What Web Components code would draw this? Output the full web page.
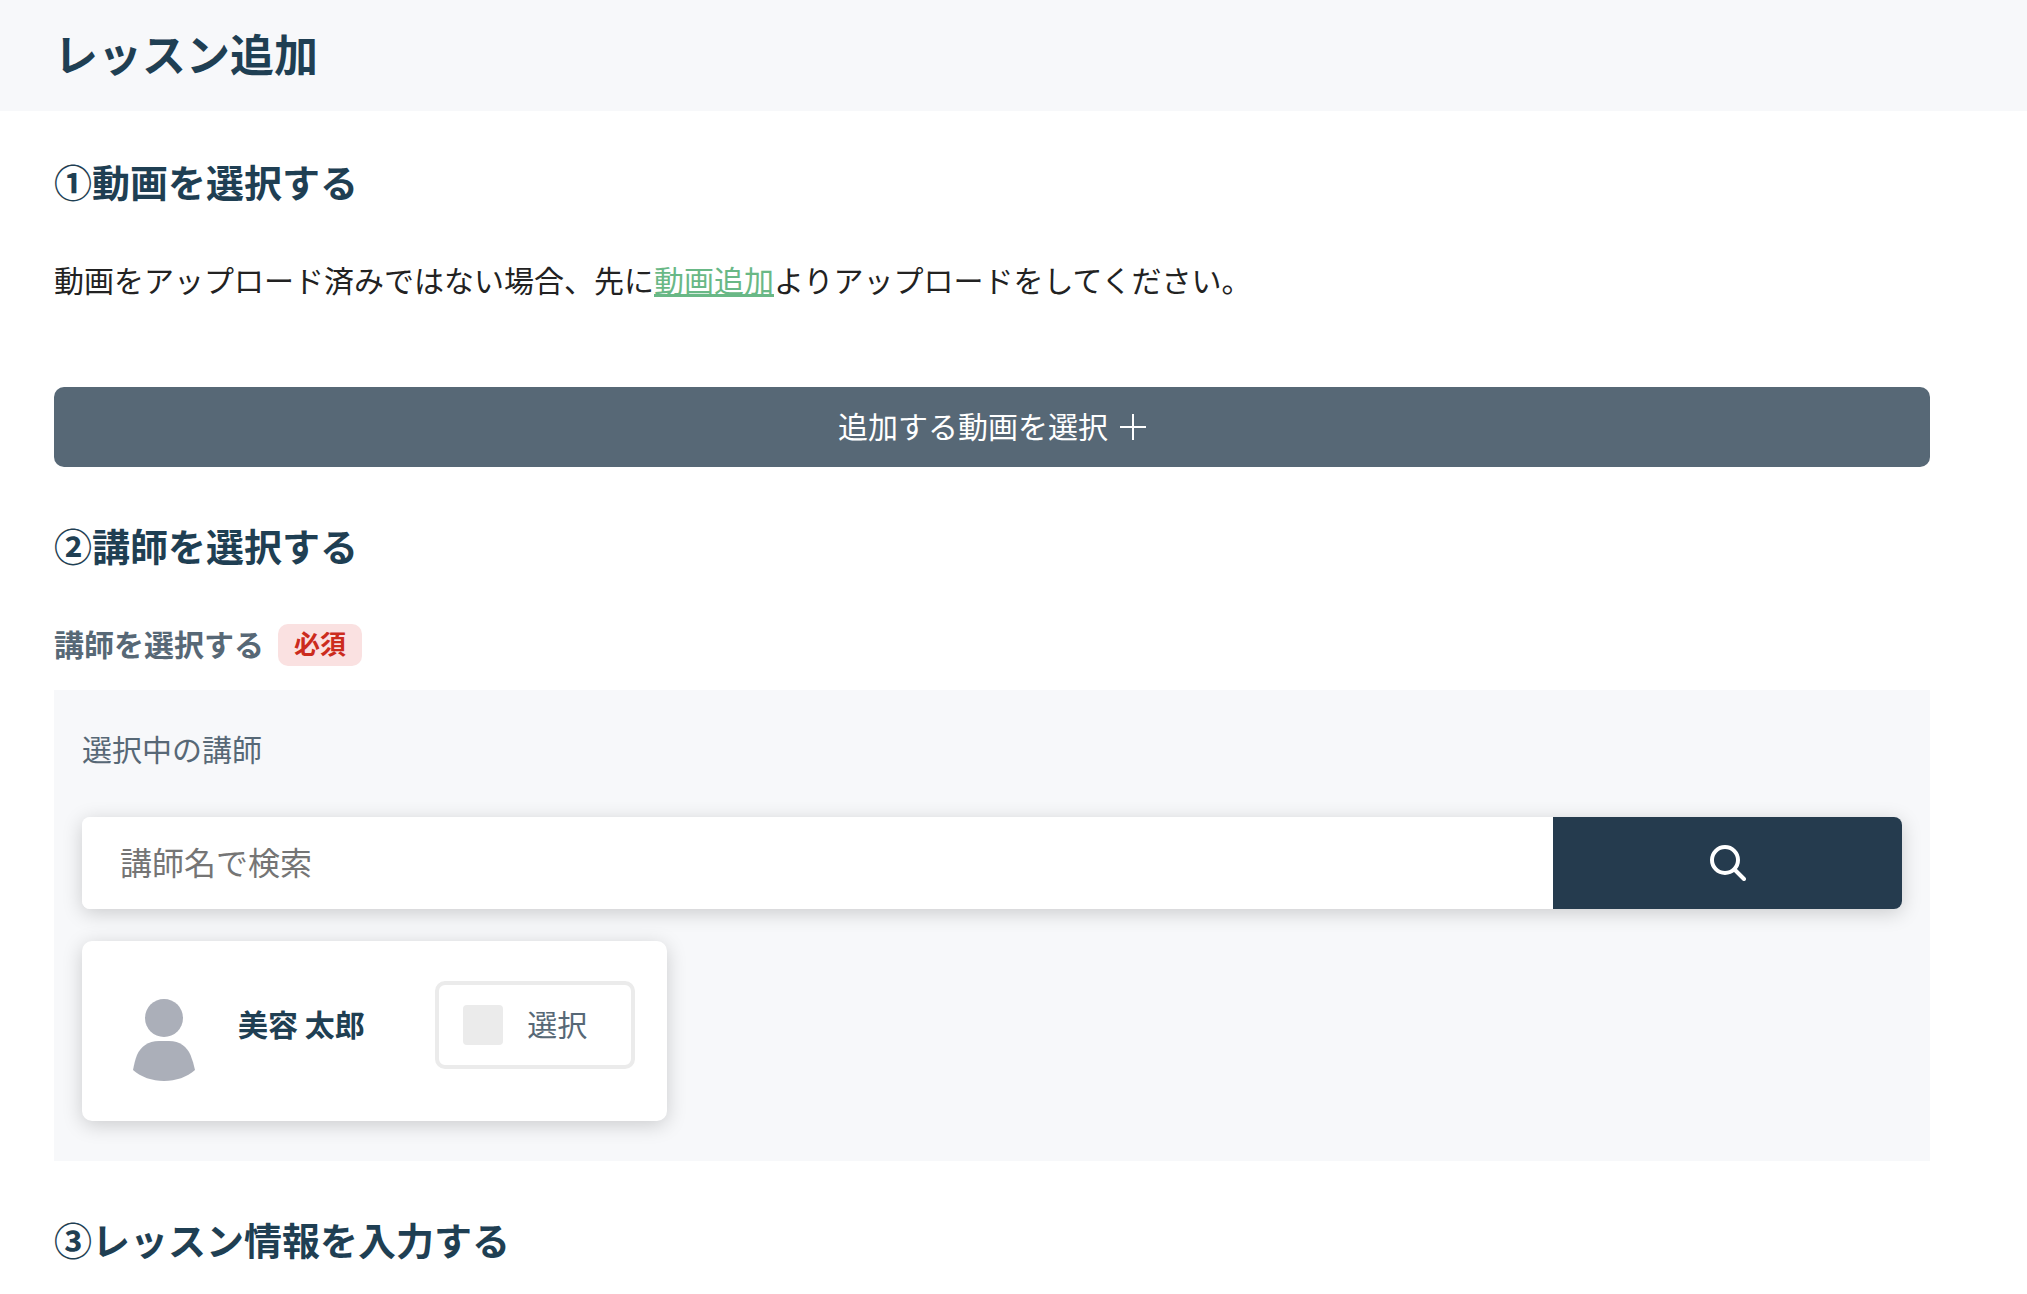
<!DOCTYPE html>
<html lang="ja">
<head>
<meta charset="utf-8">
<meta name="viewport" content="width=device-width, initial-scale=1">
<title>レッスン追加</title>
<style>
body {
  margin: 0;
  background: #fff;
  color: #222;
  font-family: "Noto Sans CJK JP", sans-serif;
  font-size: 30px;
  line-height: 44px;
  --navy: #1f3f53;
  --slate: #576876;
  --surface: #f7f8fa;
  --line: #ebebeb;
  --shadow: 0 4px 20px rgba(0, 0, 0, 0.18);
}

main {
  display: flex;
  flex-direction: column;
  gap: 50px;
  padding: 42px 97px 24px 54px;
}

p {
  margin: 0 0 86px;
}

a {
  color: #69b886;
}
</style>
</head>
<body>
<page-header>レッスン追加</page-header>
<main>
  <lesson-section heading="①動画を選択する">
    <p>動画をアップロード済みではない場合、先に<a href="#movie">動画追加</a>よりアップロードをしてください。</p>
    <add-button>追加する動画を選択</add-button>
  </lesson-section>
  <lesson-section heading="②講師を選択する">
    <field-label required>講師を選択する</field-label>
    <teacher-panel heading="選択中の講師">
      <search-box slot="search" placeholder="講師名で検索"></search-box>
      <teacher-card>美容 太郎</teacher-card>
    </teacher-panel>
  </lesson-section>
  <lesson-section heading="③レッスン情報を入力する"></lesson-section>
</main>

<script>
/**
 * @param {HTMLElement} host
 * @param {string} html
 * @returns {ShadowRoot}
 */
const render = (host, html) => {
  const template = document.createElement('template');
  template.innerHTML = html;
  const shadow = host.attachShadow({ mode: 'open' });
  shadow.appendChild(template.content.cloneNode(true));
  return shadow;
};

/** The band with the page title. */
class PageHeader extends HTMLElement {
  constructor() {
    super();
    render(this, `
<style>
:host {
  display: block;
  padding: 21px 54px 26px;
  background: var(--surface);
}

h1 {
  margin: 0;
  color: var(--navy);
  font-size: 44px;
  line-height: 64px;
}
</style>
<h1><slot></slot></h1>
`);
  }
}

/** A numbered step of the form. */
class LessonSection extends HTMLElement {
  constructor() {
    super();
    const shadow = render(this, `
<style>
:host {
  display: block;
}

h2 {
  margin: 0;
  color: var(--navy);
  font-size: 38px;
  line-height: 56px;
}

.body {
  margin-top: 48px;
}

:host(:empty) .body {
  display: none;
}
</style>
<h2></h2>
<div class="body"><slot></slot></div>
`);
    shadow.querySelector('h2').textContent = this.getAttribute('heading');
  }
}

/** Full width button with a plus icon. */
class AddButton extends HTMLElement {
  constructor() {
    super();
    render(this, `
<style>
:host {
  display: block;
}

button {
  display: flex;
  align-items: center;
  justify-content: center;
  gap: 12px;
  width: 100%;
  padding: 18px;
  border: 0;
  border-radius: 10px;
  background: var(--slate);
  color: #fff;
  font: inherit;
  cursor: pointer;
}

span {
  padding-bottom: 4px;
  line-height: 40px;
}
</style>
<button type="button">
  <span><slot></slot></span>
  <svg width="26" height="26" viewBox="0 0 26 26" fill="none" stroke="#fff" stroke-width="2" aria-hidden="true">
    <path d="M13 0v26M0 13h26"/>
  </svg>
</button>
`);
  }
}

/** Field caption, with a badge when the field is required. */
class FieldLabel extends HTMLElement {
  constructor() {
    super();
    render(this, `
<style>
:host {
  display: flex;
  gap: 14px;
  padding-top: 3px;
  margin-bottom: 24px;
  color: var(--slate);
  font-weight: bold;
  line-height: 38px;
}

.badge {
  display: none;
  padding: 0 16px 4px;
  border-radius: 10px;
  background: #fae1e1;
  color: #cc2b1d;
  font-size: 26px;
}

:host([required]) .badge {
  display: block;
}
</style>
<span><slot></slot></span>
<span class="badge">必須</span>
`);
  }
}

/** Search row above a grid of teacher cards. */
class TeacherPanel extends HTMLElement {
  constructor() {
    super();
    const shadow = render(this, `
<style>
:host {
  display: block;
  padding: 36px 28px 40px;
  background: var(--surface);
}

h3 {
  margin: 0 0 47px;
  color: var(--slate);
  font-size: 30px;
  font-weight: normal;
  line-height: 44px;
}

.cards {
  display: grid;
  grid-template-columns: repeat(3, 1fr);
  gap: 32px;
  margin-top: 32px;
}
</style>
<h3></h3>
<slot name="search"></slot>
<div class="cards"><slot></slot></div>
`);
    shadow.querySelector('h3').textContent = this.getAttribute('heading');
  }
}

/** Text box with a search button at its end. */
class SearchBox extends HTMLElement {
  constructor() {
    super();
    const shadow = render(this, `
<style>
:host {
  display: block;
}

form {
  display: flex;
  overflow: hidden;
  border-radius: 8px;
  box-shadow: var(--shadow);
}

input {
  flex: 1;
  min-width: 0;
  box-sizing: border-box;
  height: 92px;
  padding: 0 38px 4px;
  border: 0;
  background: #fff;
  color: #222;
  font: inherit;
  font-size: 32px;
}

input::placeholder {
  color: #757575;
}

button {
  display: flex;
  align-items: center;
  justify-content: center;
  width: 349px;
  padding: 0;
  border: 0;
  background: #253b4e;
  cursor: pointer;
}
</style>
<form role="search">
  <input type="text">
  <button type="submit" aria-label="検索">
    <svg width="36" height="36" viewBox="0 0 36 36" fill="none" stroke="#fff" stroke-width="4" stroke-linecap="round" aria-hidden="true">
      <circle cx="15" cy="15" r="13"/>
      <path d="M25 25l9 9"/>
    </svg>
  </button>
</form>
`);
    const input = shadow.querySelector('input');
    input.placeholder = this.getAttribute('placeholder');
    input.setAttribute('aria-label', input.placeholder);
    shadow.querySelector('form').addEventListener('submit', (event) => {
      event.preventDefault();
    });
  }
}

/** A teacher with avatar, name and a selection box. */
class TeacherCard extends HTMLElement {
  constructor() {
    super();
    render(this, `
<style>
:host {
  display: flex;
  align-items: flex-start;
  padding: 40px 32px;
  border-radius: 10px;
  background: #fff;
  box-shadow: var(--shadow);
}

svg {
  flex: none;
}

.name {
  flex: 1;
  margin-left: 24px;
  color: var(--navy);
  font-weight: bold;
  line-height: 84px;
}

label {
  display: flex;
  align-items: center;
  gap: 24px;
  box-sizing: border-box;
  width: 200px;
  height: 88px;
  padding: 0 24px;
  border: 4px solid var(--line);
  border-radius: 10px;
  color: var(--slate);
  cursor: pointer;
}

label span {
  padding-bottom: 4px;
}

input {
  appearance: none;
  flex: none;
  width: 40px;
  height: 40px;
  margin: 0;
  border-radius: 4px;
  background: var(--line);
}

input:checked {
  background: var(--navy);
}
</style>
<svg width="100" height="100" viewBox="0 0 100 100" fill="#abafb9" aria-hidden="true">
  <circle cx="50" cy="37" r="19"/>
  <path d="M45 60h10c11 0 18 6 21.500 14c2 5 3.500 10 4.500 15C73 96 62 100 50 100S27 96 19 89c1-5 2-10 4-15C26.500 66 34 60 45 60z"/>
</svg>
<span class="name"><slot></slot></span>
<label for="pick"><input id="pick" type="checkbox"><span>選択</span></label>
`);
  }
}

customElements.define('page-header', PageHeader);
customElements.define('lesson-section', LessonSection);
customElements.define('add-button', AddButton);
customElements.define('field-label', FieldLabel);
customElements.define('teacher-panel', TeacherPanel);
customElements.define('search-box', SearchBox);
customElements.define('teacher-card', TeacherCard);
</script>
</body>
</html>
